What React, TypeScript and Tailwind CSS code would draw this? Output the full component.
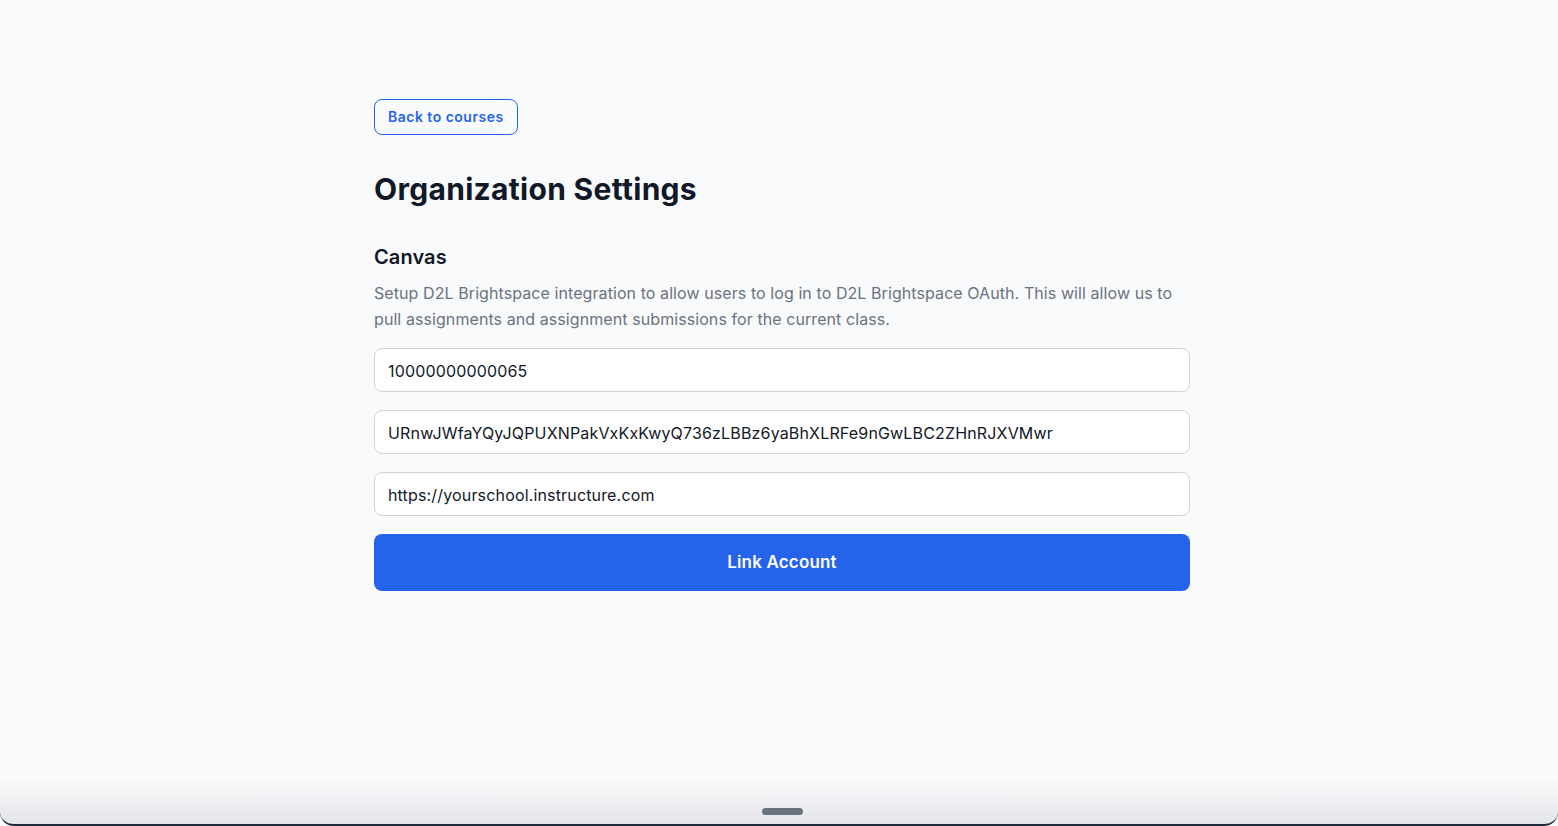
import React from 'react';

const fields = [
    '10000000000065',
    'URnwJWfaYQyJQPUXNPakVxKxKwyQ736zLBBz6yaBhXLRFe9nGwLBC2ZHnRJXVMwr',
    'https://yourschool.instructure.com',
];

export default function App() {
    return (
        <div className="relative h-[826px] overflow-hidden bg-[#f9fafb] font-['Inter',sans-serif]">
            <div className="mx-auto w-[822px] pl-[6px] pt-[99px]">
                <button className="h-[36px] rounded-lg border border-[#2563eb] px-[13px] text-sm font-semibold tracking-[0.035em] text-[#2563eb]">
                    Back to courses
                </button>

                <h1 className="mt-9 text-3xl font-bold tracking-[0.01em] text-[#111827]">Organization Settings</h1>

                <h2 className="mt-9 text-xl font-semibold tracking-[0.005em] text-[#111827]">Canvas</h2>
                <p className="mt-[9px] text-base leading-[26px] tracking-[0.005em] text-[#6b7280]">
                    Setup D2L Brightspace integration to allow users to log in to D2L Brightspace OAuth. This will allow us to pull assignments and assignment submissions for the current class.
                </p>

                <div className="mt-4 flex flex-col gap-[18px]">
                    {fields.map((value) => (
                        <input
                            key={value}
                            defaultValue={value}
                            className="h-[44px] w-full rounded-lg border border-[#d1d5db] bg-white px-[13px] pt-px text-base tracking-[0.01em] text-[#111827] outline-none"
                        />
                    ))}
                    <button className="h-[57px] w-full rounded-lg bg-[#2563eb] text-[17px] font-semibold tracking-[0.01em] text-white">
                        Link Account
                    </button>
                </div>
            </div>

            {/* bottom edge of the device frame */}
            <div className="pointer-events-none absolute inset-x-0 bottom-0 h-[48px] rounded-b-[14px] border-b-2 border-[#1f2937] bg-gradient-to-b from-transparent to-[#e3e5e9]" />
            <div className="absolute bottom-[11px] left-[762px] h-[7px] w-[41px] rounded-full bg-[#6b7280]" />
        </div>
    );
}
